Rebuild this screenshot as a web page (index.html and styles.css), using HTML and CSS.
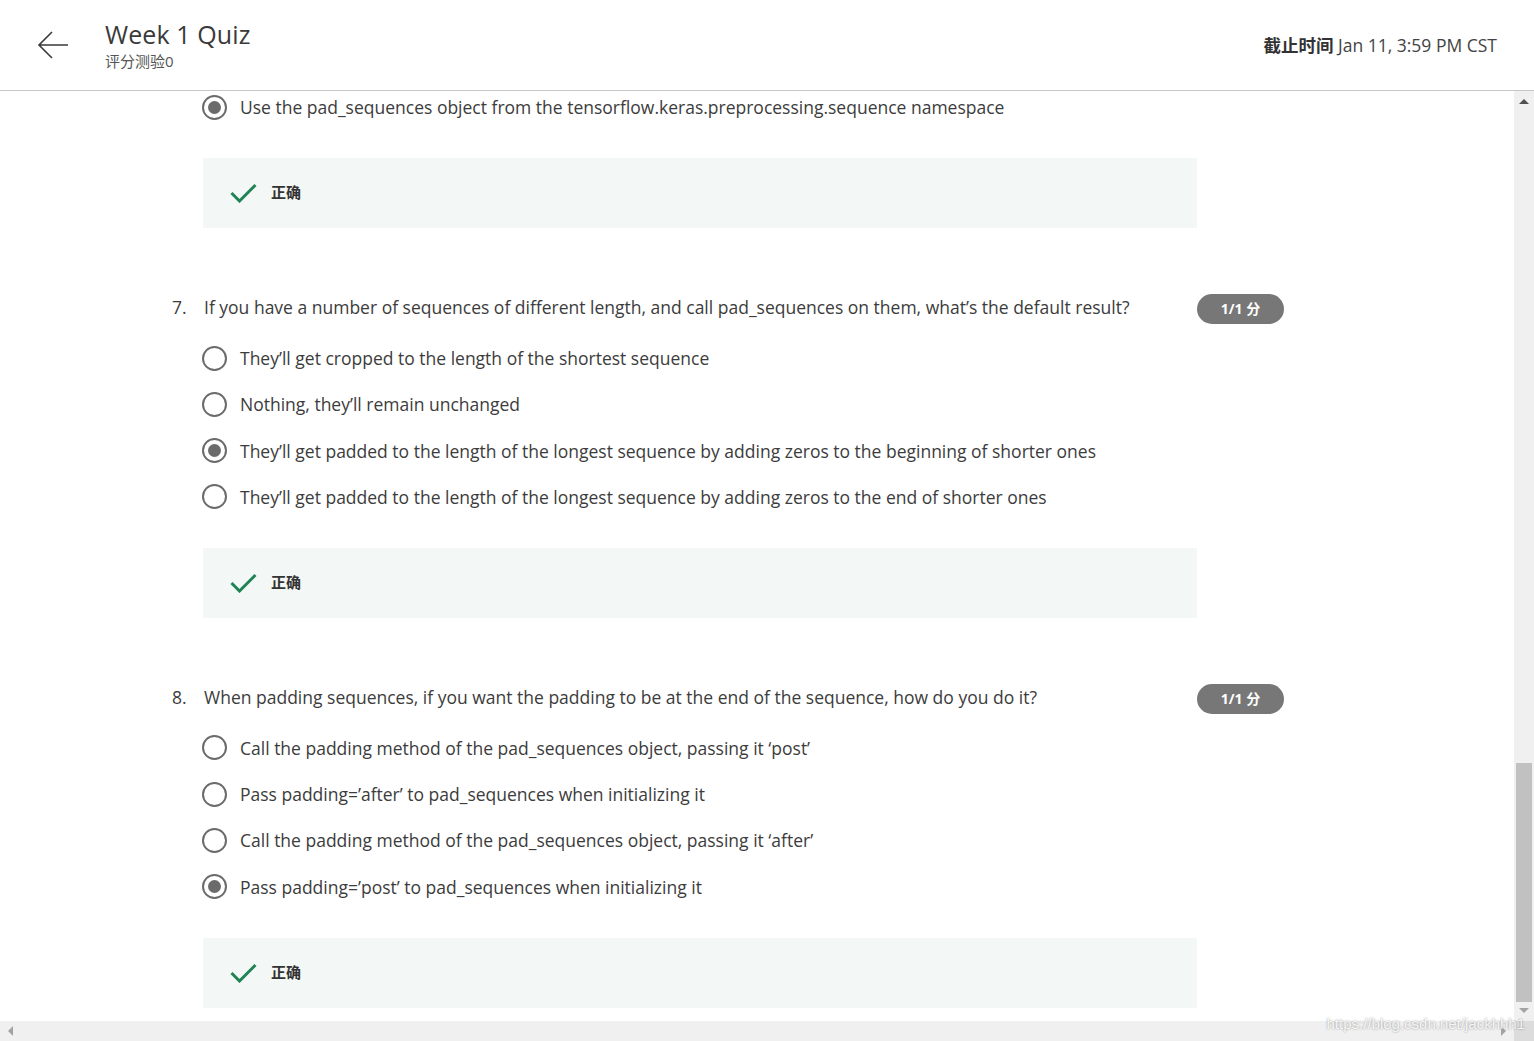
FILE: index.html
```html
<!DOCTYPE html>
<html lang="zh">
<head>
<meta charset="utf-8">
<title>Week 1 Quiz</title>
<link rel="stylesheet" href="styles.css">
</head>
<body>
<div class="app">
  <header class="topbar">
    <div class="topbar-left">
      <svg class="back" width="32" height="30" viewBox="0 0 32 30" aria-hidden="true">
        <path d="M31 15H2M15 2L2 15l13 13" fill="none" stroke="#3a3a3a" stroke-width="1.6"/>
      </svg>
      <div class="titles">
        <div class="title">Week 1 Quiz</div>
        <div class="subtitle">评分测验0</div>
      </div>
    </div>
    <div class="deadline"><b>截止时间</b> Jan 11, 3:59 PM CST</div>
  </header>

  <div class="viewport">
    <main class="content">
      <div class="quiz">
        <section class="question first">
          <ul class="options">
            <li class="option"><span class="radio on"></span>Use the pad_sequences object from the tensorflow.keras.preprocessing.sequence namespace</li>
          </ul>
          <div class="feedback"><svg width="27" height="20" viewBox="0 0 27 20"><path d="M1.5 10l8 8L25.5 2" fill="none" stroke="#1f8354" stroke-width="3"/></svg><span>正确</span></div>
        </section>

        <section class="question">
          <div class="qrow">
            <span class="num">7.</span>
            <span class="qtext">If you have a number of sequences of different length, and call pad_sequences on them, what’s the default result?</span>
            <span class="badge">1/1 分</span>
          </div>
          <ul class="options">
            <li class="option"><span class="radio"></span>They’ll get cropped to the length of the shortest sequence</li>
            <li class="option"><span class="radio"></span>Nothing, they’ll remain unchanged</li>
            <li class="option"><span class="radio on"></span>They’ll get padded to the length of the longest sequence by adding zeros to the beginning of shorter ones</li>
            <li class="option"><span class="radio"></span>They’ll get padded to the length of the longest sequence by adding zeros to the end of shorter ones</li>
          </ul>
          <div class="feedback"><svg width="27" height="20" viewBox="0 0 27 20"><path d="M1.5 10l8 8L25.5 2" fill="none" stroke="#1f8354" stroke-width="3"/></svg><span>正确</span></div>
        </section>

        <section class="question">
          <div class="qrow">
            <span class="num">8.</span>
            <span class="qtext">When padding sequences, if you want the padding to be at the end of the sequence, how do you do it?</span>
            <span class="badge">1/1 分</span>
          </div>
          <ul class="options">
            <li class="option"><span class="radio"></span>Call the padding method of the pad_sequences object, passing it ‘post’</li>
            <li class="option"><span class="radio"></span>Pass padding=’after’ to pad_sequences when initializing it</li>
            <li class="option"><span class="radio"></span>Call the padding method of the pad_sequences object, passing it ‘after’</li>
            <li class="option"><span class="radio on"></span>Pass padding=’post’ to pad_sequences when initializing it</li>
          </ul>
          <div class="feedback"><svg width="27" height="20" viewBox="0 0 27 20"><path d="M1.5 10l8 8L25.5 2" fill="none" stroke="#1f8354" stroke-width="3"/></svg><span>正确</span></div>
        </section>
      </div>
    </main>

    <div class="vscroll">
      <span class="arrow up"></span>
      <span class="spacer"></span>
      <span class="thumb"></span>
      <span class="arrow down"></span>
    </div>
    <div class="hscroll">
      <span class="arrow left"></span>
      <span class="spacer"></span>
      <span class="arrow right"></span>
    </div>
    <div class="corner"></div>
    <div class="watermark">https://blog.csdn.net/jackhhh1</div>
  </div>
</div>
</body>
</html>
```

FILE: styles.css
```css
* { box-sizing: border-box; }
html, body { margin: 0; padding: 0; }
body {
  width: 1534px;
  height: 1041px;
  overflow: hidden;
  background: #fff;
  font-family: "Open Sans", "Noto Sans CJK SC", sans-serif;
  color: #3c3c3c;
}
.app {
  height: 1041px;
  display: flex;
  flex-direction: column;
}
.topbar {
  height: 91px;
  flex: none;
  border-bottom: 1px solid #c6c6c6;
  display: flex;
  align-items: center;
  justify-content: space-between;
  padding: 0 37px 0 37px;
}
.topbar-left {
  display: flex;
  align-items: center;
}
.back { margin-right: 36px; }
.titles { display: flex; flex-direction: column; }
.title {
  font-size: 25px;
  line-height: 30px;
  color: #3a3a3a;
  letter-spacing: 0.1px;
}
.subtitle {
  font-size: 15px;
  line-height: 20px;
  color: #555;
  margin-top: 2px;
}
.deadline {
  font-size: 17.5px;
  color: #444;
  margin-top: -2px;
}
.deadline b { font-weight: 700; color: #333; }

.viewport {
  flex: 1;
  display: grid;
  grid-template-columns: 1fr 20px;
  grid-template-rows: 1fr 20px;
  position: relative;
  min-height: 0;
}
.content {
  overflow: hidden;
  min-height: 0;
}
.quiz {
  margin: -7px 0 0 172px;
  width: 1112px;
}
.question { margin-bottom: 67px; }
.qrow {
  display: grid;
  grid-template-columns: 32px 1fr 87px;
  align-items: start;
  font-size: 17.5px;
  line-height: 24px;
  color: #3c3c3c;
  margin-bottom: 10.6px;
}
.badge {
  margin-top: -1px;
  height: 30px;
  border-radius: 15px;
  background: #777;
  color: #fff;
  font-weight: 700;
  font-size: 14px;
  line-height: 30px;
  text-align: center;
}
.options {
  list-style: none;
  margin: 0;
  padding: 0 0 0 30px;
}
.option {
  height: 46.3px;
  display: flex;
  align-items: center;
  font-size: 17.5px;
  color: #3c3c3c;
}
.radio {
  width: 25px;
  height: 25px;
  border: 2px solid #6b6b6b;
  border-radius: 50%;
  margin-right: 13px;
  flex: none;
  display: flex;
  align-items: center;
  justify-content: center;
}
.radio.on::after {
  content: "";
  width: 13px;
  height: 13px;
  border-radius: 50%;
  background: #6b6b6b;
}
.feedback {
  margin: 28px 0 0 31px;
  width: 994px;
  height: 70px;
  background: #f3f8f6;
  display: flex;
  align-items: center;
  padding-left: 27px;
  gap: 14px;
}
.feedback span {
  font-size: 15px;
  font-weight: 700;
  color: #333;
  margin-bottom: 3px;
}

.vscroll {
  grid-column: 2;
  grid-row: 1;
  background: #f0f0f0;
  display: flex;
  flex-direction: column;
  align-items: center;
}
.vscroll .spacer { flex: 1; }
.thumb {
  width: 16px;
  height: 239px;
  background: #c1c1c1;
}
.arrow { flex: none; width: 0; height: 0; }
.arrow.up {
  margin: 8px 0 0;
  border-left: 5px solid transparent;
  border-right: 5px solid transparent;
  border-bottom: 5px solid #505050;
}
.arrow.down {
  margin: 6px 0 8px;
  border-left: 5px solid transparent;
  border-right: 5px solid transparent;
  border-top: 5px solid #a3a3a3;
}
.hscroll {
  grid-column: 1;
  grid-row: 2;
  background: #f0f0f0;
  display: flex;
  align-items: center;
}
.hscroll .spacer { flex: 1; }
.arrow.left {
  margin-left: 8px;
  border-top: 5px solid transparent;
  border-bottom: 5px solid transparent;
  border-right: 5px solid #a3a3a3;
}
.arrow.right {
  margin-right: 8px;
  border-top: 5px solid transparent;
  border-bottom: 5px solid transparent;
  border-left: 5px solid #a3a3a3;
}
.corner {
  grid-column: 2;
  grid-row: 2;
  background: #dcdcdc;
}
.watermark {
  position: absolute;
  right: 9px;
  bottom: 9px;
  font-family: "Liberation Sans", Arial, sans-serif;
  font-size: 15px;
  color: rgba(255, 255, 255, 0.9);
  text-shadow: 0 0 2px rgba(0, 0, 0, 0.45);
}
```
